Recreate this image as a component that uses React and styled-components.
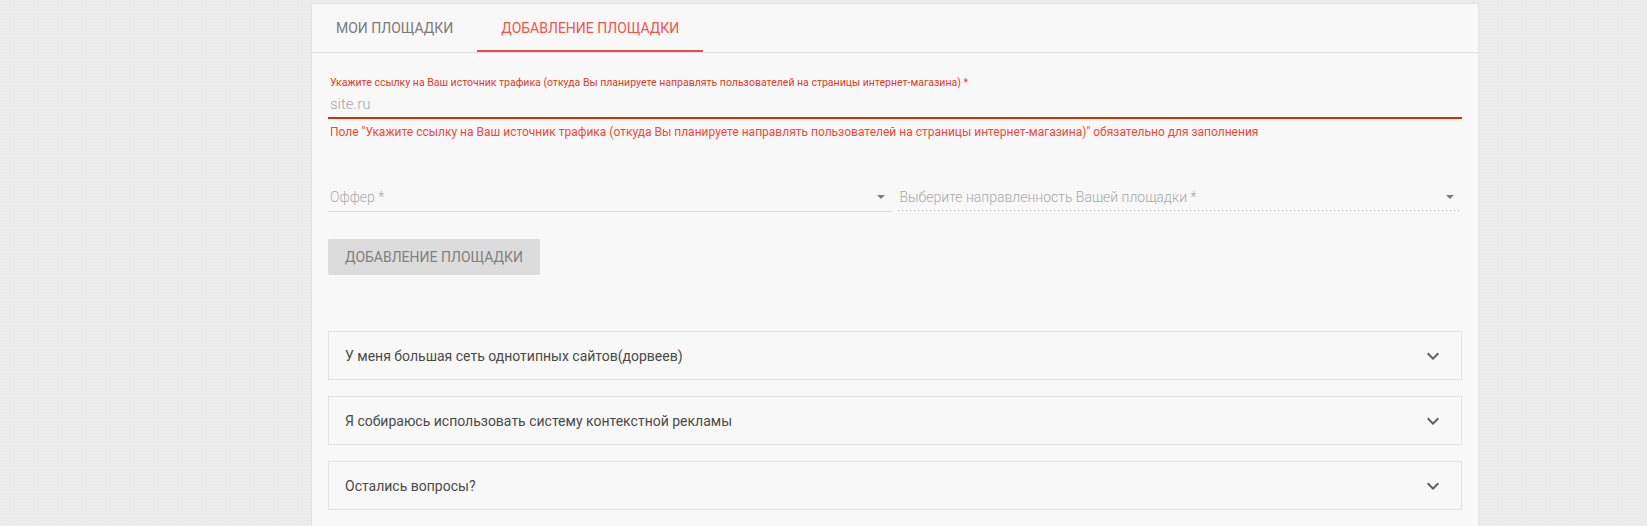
import React, { useState } from "react";
import styled, { createGlobalStyle } from "styled-components";

const GlobalStyle = createGlobalStyle`
  html, body {
    margin: 0;
    padding: 0;
    background: #ececec;
    font-family: Roboto, "Noto Sans", Arial, sans-serif;
  }
`;

const tabs = ["Мои площадки", "Добавление площадки"];

const faq = [
  "У меня большая сеть однотипных сайтов(дорвеев)",
  "Я собираюсь использовать систему контекстной рекламы",
  "Остались вопросы?",
];

const fieldLabel =
  "Укажите ссылку на Ваш источник трафика (откуда Вы планируете направлять пользователей на страницы интернет-магазина)";

const ChevronDown = () => (
  <svg width="24" height="24" viewBox="0 0 24 24" fill="#5f5f5f">
    <path d="M16.59 8.59L12 13.17 7.41 8.59 6 10l6 6 6-6z" />
  </svg>
);

export default function App() {
  const [activeTab, setActiveTab] = useState(1);

  return (
    <Page>
      <GlobalStyle />
      <Panel>
        <TabBar>
          {tabs.map((tab, i) => (
            <Tab key={tab} $active={i === activeTab} onClick={() => setActiveTab(i)}>
              {tab}
            </Tab>
          ))}
        </TabBar>

        <Form>
          <Label>{fieldLabel} *</Label>
          <Input placeholder="site.ru" />
          <ErrorText>
            Поле "{fieldLabel}" обязательно для заполнения
          </ErrorText>

          <SelectRow>
            <Select>
              <SelectText>Оффер *</SelectText>
              <Arrow />
            </Select>
            <Select $dotted>
              <SelectText>Выберите направленность Вашей площадки *</SelectText>
              <Arrow />
            </Select>
          </SelectRow>

          <SubmitButton disabled>Добавление площадки</SubmitButton>

          <Accordions>
            {faq.map((q) => (
              <AccordionItem key={q}>
                <span>{q}</span>
                <ChevronDown />
              </AccordionItem>
            ))}
          </Accordions>
        </Form>
      </Panel>
    </Page>
  );
}

const Page = styled.div`
  min-height: 526px;
  padding-top: 3px;
  background-color: #ececec;
  background-image: radial-gradient(#e6e6e6 0.6px, transparent 0.8px);
  background-size: 3px 3px;
`;

const Panel = styled.div`
  margin-left: 311px;
  width: 1166px;
  min-height: 540px;
  background: #f8f8f8;
  border: 1px solid #e4e4e4;
`;

const TabBar = styled.div`
  display: flex;
  height: 48px;
  border-bottom: 1px solid #e0e0e0;
`;

const Tab = styled.div`
  display: flex;
  align-items: center;
  padding: 2px 24px 0;
  font-size: 14px;
  text-transform: uppercase;
  color: ${(p) => (p.$active ? "#f3534b" : "#7a7a7a")};
  border-bottom: 2px solid ${(p) => (p.$active ? "#f24a44" : "transparent")};
  cursor: pointer;
`;

const Form = styled.div`
  display: flex;
  flex-direction: column;
  padding: 23px 16px 0 16px;
`;

const Label = styled.div`
  padding-left: 2px;
  font-size: 10.5px;
  line-height: 14px;
  color: #e53a23;
`;

const Input = styled.input`
  margin-top: 1px;
  height: 26px;
  padding: 0 0 0 2px;
  border: none;
  border-bottom: 2px solid #dd2c00;
  background: transparent;
  font-family: inherit;
  font-size: 15px;
  font-weight: 300;
  color: #333;
  outline: none;

  &::placeholder {
    color: #a8a8a8;
  }
`;

const ErrorText = styled.div`
  margin-top: 5px;
  padding-left: 2px;
  font-size: 12px;
  line-height: 16px;
  color: #f4473a;
`;

const SelectRow = styled.div`
  display: grid;
  grid-template-columns: 1fr 1fr;
  column-gap: 5px;
  margin-top: 43px;
`;

const Select = styled.div`
  display: flex;
  align-items: center;
  height: 28px;
  padding: 0 8px 0 2px;
  border-bottom: 1px solid ${(p) => (p.$dotted ? "transparent" : "#dedede")};
  background-image: ${(p) =>
    p.$dotted
      ? "linear-gradient(to right, #b5b5b5 1px, transparent 1px)"
      : "none"};
  background-size: 4px 1px;
  background-repeat: repeat-x;
  background-position: left bottom;
`;

const SelectText = styled.span`
  flex: 1;
  font-size: 14px;
  font-weight: 300;
  color: #a8a8a8;
`;

const Arrow = styled.span`
  width: 0;
  height: 0;
  border-left: 4px solid transparent;
  border-right: 4px solid transparent;
  border-top: 4px solid #7a7a7a;
`;

const SubmitButton = styled.button`
  align-self: flex-start;
  margin-top: 27px;
  height: 36px;
  width: 212px;
  padding: 0 16px;
  border: none;
  border-radius: 2px;
  background: #dcdcdc;
  font-family: inherit;
  font-size: 14px;
  text-transform: uppercase;
  color: #808080;
`;

const Accordions = styled.div`
  display: flex;
  flex-direction: column;
  gap: 16px;
  margin-top: 56px;
`;

const AccordionItem = styled.div`
  display: flex;
  align-items: center;
  justify-content: space-between;
  height: 47px;
  padding: 0 16px;
  border: 1px solid #e4e4e4;
  background: #f8f8f8;
  font-size: 14px;
  color: #4a4a4a;
`;
